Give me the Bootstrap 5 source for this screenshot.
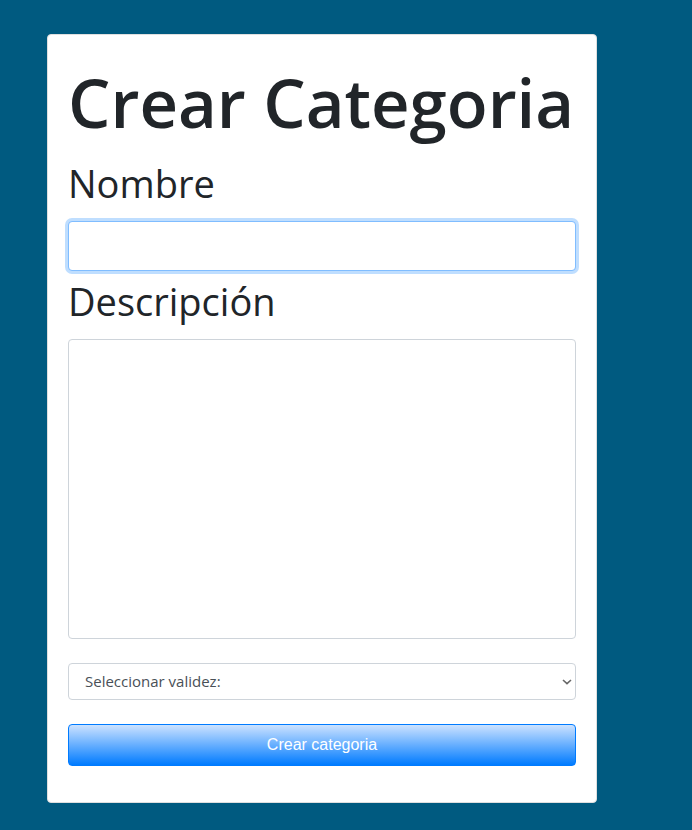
<!DOCTYPE html>
<html lang="es">
<head>
<meta charset="utf-8">
<meta name="viewport" content="width=device-width, initial-scale=1">
<title>Crear Categoria</title>
<link href="https://cdn.jsdelivr.net/npm/bootstrap@5.3.0/dist/css/bootstrap.min.css" rel="stylesheet">
<style>
  body { background: #005a80; font-family: "Segoe UI", "Open Sans", "Noto Sans", sans-serif; }
  .page-area { padding: 34px 95px 27px 47px; }
  .category-card { border-radius: 4px; border-color: #dfdfdf; }
  .category-card .card-body { padding: 20px 20px 36px; }
  .card-heading { font-size: 67px; line-height: 94px; font-weight: 600; color: #212529; white-space: nowrap; }
  .field-label { font-size: 38px; line-height: 60px; color: #212529; }
  .form-control, .category-select { border: 1px solid #ced4da; border-radius: 4px; }
  .name-input { height: 50px; }
  .name-input:focus { border-color: #80bdff; box-shadow: 0 0 0 3px #bfdeff; }
  .description-input { height: 300px; resize: none; }
  .category-select {
    height: 37px; padding: 0 32px 0 16px; font-size: 15px; color: #495057; appearance: none;
    background: #fff url("data:image/svg+xml,%3Csvg xmlns='http://www.w3.org/2000/svg' viewBox='0 0 10 6'%3E%3Cpath d='M1 1l4 3.6L9 1' fill='none' stroke='%23666' stroke-width='1.6'/%3E%3C/svg%3E") no-repeat right 3px center / 10px 6px;
  }
  .create-btn {
    height: 42px; padding: 0; border: 1px solid #007bff; border-radius: 4px; color: #fff;
    font-family: Arial, "Liberation Sans", sans-serif; font-size: 16px;
    background: linear-gradient(#cce2ff, #007bff);
  }
  .create-btn:hover { color: #fff; border-color: #0062cc; }
</style>
</head>
<body>
<main class="page-area">
  <div class="card category-card">
    <form class="card-body">
      <h1 class="card-heading mb-1">Crear Categoria</h1>
      <label class="field-label d-block mb-2" for="nombre">Nombre</label>
      <input class="form-control name-input" type="text" id="nombre" name="nombre" autofocus>
      <label class="field-label d-block mb-2" for="descripcion">Descripción</label>
      <textarea class="form-control description-input d-block mb-4" id="descripcion" name="descripcion"></textarea>
      <select class="category-select d-block w-100 mb-4" id="validez" name="validez" aria-label="Seleccionar validez">
        <option selected>Seleccionar validez:</option>
      </select>
      <button class="btn create-btn d-block w-100" type="submit">Crear categoria</button>
    </form>
  </div>
</main>
<script src="https://cdn.jsdelivr.net/npm/bootstrap@5.3.0/dist/js/bootstrap.bundle.min.js"></script>
</body>
</html>
